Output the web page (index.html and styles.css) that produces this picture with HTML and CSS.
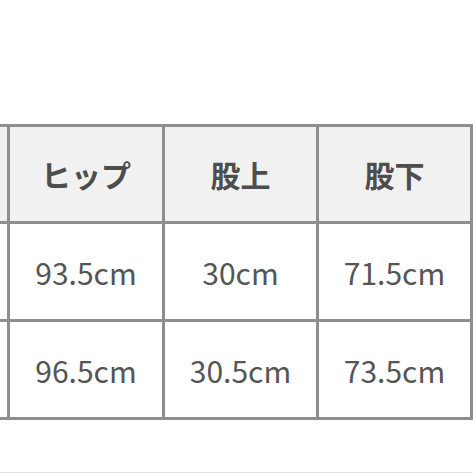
FILE: index.html
```html
<!DOCTYPE html>
<html lang="ja">
<head>
<meta charset="utf-8">
<link rel="stylesheet" href="styles.css">
</head>
<body>
<div class="page">
  <div class="size-table">
    <div class="cell head"></div>
    <div class="cell head">ヒップ</div>
    <div class="cell head">股上</div>
    <div class="cell head">股下</div>
    <div class="cell"></div>
    <div class="cell">93.5cm</div>
    <div class="cell">30cm</div>
    <div class="cell">71.5cm</div>
    <div class="cell"></div>
    <div class="cell">96.5cm</div>
    <div class="cell">30.5cm</div>
    <div class="cell">73.5cm</div>
  </div>
  <div class="divider"></div>
</div>
</body>
</html>
```

FILE: styles.css
```css
html, body {
  margin: 0;
  padding: 0;
  background: #ffffff;
}

.page {
  width: 473px;
  height: 473px;
  padding-top: 124px;
  box-sizing: border-box;
  display: flex;
  flex-direction: column;
  overflow: hidden;
}

.size-table {
  display: grid;
  grid-template-columns: 7px 152px 151px 151px;
  grid-template-rows: 94px 95px 95px;
  gap: 3px;
  padding: 3px 3px 3px 0;
  background: #8e8e8e;
  width: 473px;
  box-sizing: border-box;
}

.cell {
  background: #ffffff;
  display: flex;
  align-items: center;
  justify-content: center;
  font-family: "Noto Sans CJK JP", "Noto Sans", sans-serif;
  font-size: 30px;
  color: #555555;
  white-space: nowrap;
  overflow: hidden;
}

.cell.head {
  background: #f1f1f1;
  font-weight: 700;
  color: #4d4d4d;
}

.divider {
  margin-top: auto;
  height: 1px;
  background: #e2e2e2;
}
```
